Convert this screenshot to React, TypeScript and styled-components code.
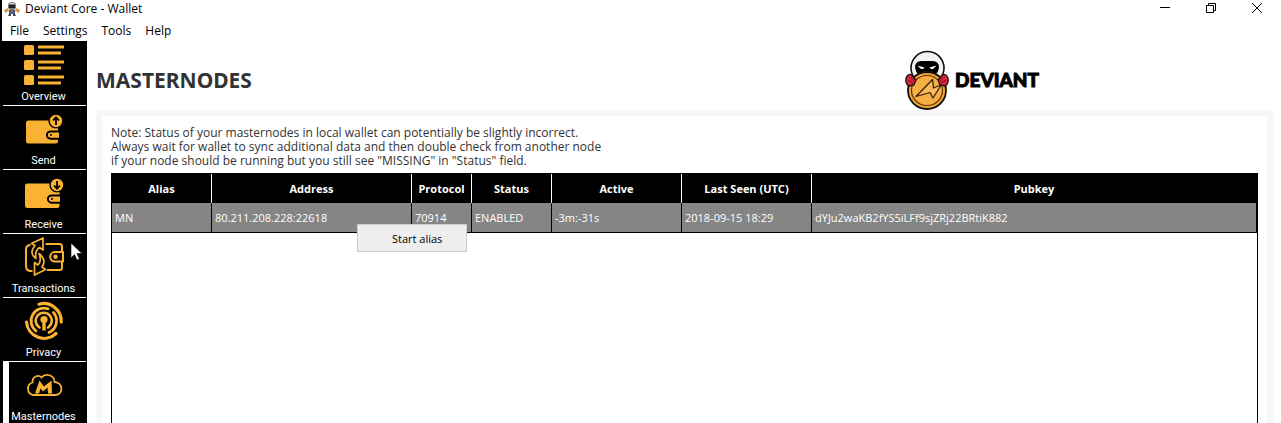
import React from "react";
import styled, { createGlobalStyle } from "styled-components";

const gold = "#f9b233";
const ui = `"Open Sans", "Noto Sans", sans-serif`;
const display = `"Noto Sans", "Open Sans", sans-serif`;

const GlobalStyle = createGlobalStyle`
  * { box-sizing: border-box; }
  body { margin: 0; background: #fff; color: #000; font: 11px/14px ${ui}; }
  button { font: inherit; color: inherit; background: none; border: 0; padding: 0; }
`;

const Window = styled.div`
  display: flex;
  flex-direction: column;
  height: 100vh;
  overflow: hidden;
  border-left: 2px solid #000;
`;

const TitleBar = styled.header`
  display: flex;
  align-items: center;
  height: 18px;
  flex: none;
  padding: 0 18px 0 2px;
`;

const Title = styled.span`
  flex: 1;
  padding-left: 5px;
  font-size: 12px;
`;

const WindowButton = styled.button`
  display: flex;
  align-items: center;
  justify-content: center;
  width: 12px;
  height: 14px;
  margin-left: 34px;
`;

const MenuBar = styled.nav`
  display: flex;
  align-items: center;
  gap: 14px;
  flex: none;
  height: 23px;
  padding: 2px 8px 0;
`;

const MenuItem = styled.button`
  font-size: 12px;
`;

const Main = styled.div`
  display: flex;
  flex: 1;
  min-height: 0;
`;

const Sidebar = styled.nav`
  flex: none;
  width: 85px;
  overflow: hidden;
  padding: 1px 1px 0;
  background: #000;
`;

const NavButton = styled.button<{ $active?: boolean }>`
  display: flex;
  flex-direction: column;
  align-items: center;
  position: relative;
  width: 100%;
  height: 64px;
  border-bottom: 1px solid #fff;
  color: #fff;
  box-shadow: ${(p) => (p.$active ? "inset 6px 0 #fff" : "none")};
`;

const NavIcon = styled.svg`
  display: block;
  width: 84px;
  height: 46px;
  flex: none;
`;

const NavLabel = styled.span`
  padding: 2px 2px 0 0;
  font: 11px/14px Roboto, sans-serif;
`;

const Pointer = styled.svg`
  position: absolute;
  left: 67px;
  top: 8px;
`;

const Page = styled.main`
  display: flex;
  flex-direction: column;
  flex: 1;
  min-width: 0;
  padding: 0 8px 0 9px;
`;

const PageHeader = styled.div`
  display: flex;
  align-items: center;
  justify-content: space-between;
  flex: none;
  height: 69px;
  padding: 9px 234px 0 0;
`;

const Heading = styled.h1`
  margin: 0;
  color: #333;
  font: bold 21px/24px ${display};
`;

const Brand = styled.div`
  display: flex;
  align-items: center;
  gap: 4px;
  font: 900 19px/24px Lato, sans-serif;
  -webkit-text-stroke: 1px #000;
`;

const Panel = styled.section`
  display: flex;
  flex-direction: column;
  flex: 1;
  padding: 10px 9px 0;
  border: solid #f7f7f7;
  border-width: 6px 6px 0;
`;

const Note = styled.p`
  margin: 0 0 5px;
  color: #333;
  font: 12px/14px ${ui};
`;

const TableFrame = styled.div`
  position: relative;
  flex: 1;
  border: solid #000;
  border-width: 1px 1px 0;
`;

const Table = styled.table`
  width: 100%;
  table-layout: fixed;
  border-collapse: separate;
  border-spacing: 0;
`;

const HeadCell = styled.th`
  height: 29px;
  padding: 0;
  background: #000;
  color: #fff;
  border-right: 1px solid #fff;
  font-weight: bold;
  &:last-child { border-color: #000; }
`;

const Cell = styled.td`
  height: 30px;
  padding: 0 3px;
  background: #858585;
  color: #fff;
  border: solid #000;
  border-width: 0 1px 1px 0;
  white-space: nowrap;
`;

const ContextMenu = styled.div`
  position: absolute;
  left: 245px;
  top: 50px;
  width: 110px;
  height: 28px;
  border: 1px solid #ccc;
  background: #eee;
`;

const ContextItem = styled.button`
  width: 100%;
  height: 26px;
  padding: 1px 0 0 34px;
  text-align: left;
`;

const OverviewIcon = () => (
  <g fill={gold}>
    {[3, 18, 33].map((y) => (
      <g key={y}>
        <rect x="21" y={y} width="10" height="10" rx="1.5" />
        <rect x="35" y={y + 0.5} width="26" height="3" />
        <rect x="35" y={y + 6.5} width="23" height="3" />
      </g>
    ))}
  </g>
);

const WalletIcon = ({ down }: { down?: boolean }) => (
  <g transform={down ? "translate(0 -1)" : undefined}>
    <rect x={down ? 22 : 23} y="14.5" width={down ? 34.5 : 32} height={down ? 24.5 : 23} rx="2.5" fill={gold} />
    <g transform={down ? "translate(1 1)" : undefined}>
      <circle cx="53" cy="15" r="7.6" fill="#000" />
      <circle cx="53" cy="15" r="6.2" fill={gold} />
      <path
        d="M53 19v-7M50 14.5l3-3.2 3 3.2"
        transform={down ? "rotate(180 53 15)" : undefined}
        fill="none"
        stroke="#000"
        strokeWidth="1.8"
      />
      <path d="M56 25.5h-8.5a3.6 3.6 0 0 0 0 7.2H56" fill={gold} stroke="#000" strokeWidth="2" />
      <circle cx="48" cy="29" r="1" fill="#000" />
    </g>
  </g>
);

const TransactionsIcon = () => (
  <g fill="none" stroke={gold} strokeWidth="2" strokeLinejoin="round">
    <path d="M27.500 11c-3 0-4.500 1.500-4.500 4.500v16.500c0 3 2 5 5 5h1.500M42.500 10h14q2.500 0 2.500 2.500v5.500M59 27.500v6q0 2.500-2.500 2.500H44" />
    <path d="M60 18h-8a4.800 4.800 0 0 0 0 9.600h8z" />
    <circle cx="52.500" cy="22.800" r="1.300" fill={gold} />
    <path d="M28.500 9.500L40 4v12l-3.500-2.500Q31.500 17 33 24.500Q25.500 19 32 11.500z" strokeWidth="1.700" />
    <path d="M42.500 35.500L31.500 41V28.500l3.500 2.500q4-4 1-11.500q8 6.500 3 13.500z" strokeWidth="1.700" />
  </g>
);

const PrivacyIcon = () => (
  <g fill="none" stroke={gold} strokeWidth="3.200" strokeLinecap="round">
    <path d="M36 6.200A17.500 17.500 0 0 1 58.200 24" />
    <path d="M23.500 24A17.500 17.500 0 0 0 53 35.500" />
    <path d="M45 10.800A12.800 12.800 0 0 0 33 33M50.500 14.500A12.800 12.800 0 0 1 46 34.500" strokeWidth="2.800" />
    <path d="M36.500 29.500A8 8 0 1 1 45 29.500" strokeWidth="2.600" />
    <circle cx="41" cy="21.500" r="3.600" fill={gold} stroke="none" />
    <path d="M41 22v10.500" strokeLinecap="butt" strokeWidth="3.400" />
  </g>
);

const MasternodeIcon = () => (
  <g>
    <path
      d="M30 33a6.500 6.500 0 0 1-.5-12.500c-.5-6 6-8.500 9-5 4-5 13-2.500 13 4.500 9 .5 9 12.500 1 13z"
      fill="none"
      stroke={gold}
      strokeWidth="1.8"
    />
    <path d="M32 31.500l4.500-13 4.500 6 7.500-6 .500 13h-4l-.500-6-4.500 4-2.500-3-1.500 5z" fill={gold} />
  </g>
);

const navItems = [
  { label: "Overview", icon: <OverviewIcon /> },
  { label: "Send", icon: <WalletIcon /> },
  { label: "Receive", icon: <WalletIcon down /> },
  { label: "Transactions", icon: <TransactionsIcon /> },
  { label: "Privacy", icon: <PrivacyIcon /> },
  { label: "Masternodes", icon: <MasternodeIcon /> },
];

const columns = [
  { label: "Alias", width: 100, value: "MN" },
  { label: "Address", width: 200, value: "80.211.208.228:22618" },
  { label: "Protocol", width: 60, value: "70914" },
  { label: "Status", width: 80, value: "ENABLED" },
  { label: "Active", width: 130, value: "-3m:-31s" },
  { label: "Last Seen (UTC)", width: 130, value: "2018-09-15 18:29" },
  { label: "Pubkey", value: "dYJu2waKB2fYS5iLFf9sjZRj22BRtiK882" },
];

const AppIcon = () => (
  <svg width="16" height="16" viewBox="0 0 16 16">
    <path d="M4 5a4 4 0 0 1 8 0v2l-2 2H6L4 7z" fill="#777" />
    <path d="M5 4h6v3H5z" fill="#222" />
    <path d="M6 2h4v1H6z" fill="#ddd" />
    <path d="M4 7L0 9l1 3 4-2zM12 7l4 2-1 3-4-2z" fill="#d89a3c" />
    <path d="M5 9h6v4H5z" fill="#345f94" />
    <path d="M7 9h2v3H7z" fill="#b9483a" />
    <path d="M5 13h2v2H4zM9 13h2l1 2H9z" fill="#444" />
  </svg>
);

const Mascot = () => (
  <svg width="47" height="60" viewBox="0 0 47 60">
    <circle cx="23.500" cy="18" r="16.500" fill="#f2f2f2" stroke="#111" strokeWidth="1.600" />
    <path d="M11 16q1-5 7-5h10q6 0 7 5 0 7-5 9H16q-5-2-5-9z" fill="#000" />
    <path d="M13.500 15.500l7 2q-1 2-3.500 1.500zM32.500 15.500l-7 2q1 2 3.500 1.500z" fill="#fff" />
    <ellipse cx="23" cy="40.500" rx="19" ry="18.500" fill="#f3a52f" stroke="#111" strokeWidth="1.800" />
    <ellipse cx="23" cy="40.500" rx="15.500" ry="15" fill="#f7ae42" stroke="#5a3210" strokeWidth="1.200" />
    <path d="M12 46.500L28.500 29.500l1 8.500 8-3.500L29 48l-3-5.500z" fill="#f9b85a" stroke="#3b2009" strokeWidth="1.300" strokeLinejoin="round" />
    <path d="M2 28q2-5 6-3l4 5-2 5-5 1q-4-2-3-8zM44 28q-2-5-6-3l-4 5 2 5 5 1q4-2 3-8z" fill="#d7263b" stroke="#111" strokeWidth="1.300" />
    <path d="M4 30l5 3M7 27l3 4M42 30l-5 3M39 27l-3 4" stroke="#7b0e1c" strokeWidth="1" />
  </svg>
);

export default function App() {
  return (
    <>
      <GlobalStyle />
      <Window>
        <TitleBar>
          <AppIcon />
          <Title>Deviant Core - Wallet</Title>
          <WindowButton aria-label="Minimize">
            <svg width="12" height="12"><path d="M1 4.500h10" stroke="#000" /></svg>
          </WindowButton>
          <WindowButton aria-label="Restore">
            <svg width="12" height="12" fill="none" stroke="#000">
              <path d="M1.500 2.500h7v7h-7zM3.500 2.500v-2h7v7h-2" />
            </svg>
          </WindowButton>
          <WindowButton aria-label="Close">
            <svg width="12" height="12"><path d="M1 0l10 10M11 0L1 10" stroke="#000" /></svg>
          </WindowButton>
        </TitleBar>
        <MenuBar>
          {["File", "Settings", "Tools", "Help"].map((m) => (
            <MenuItem key={m}>{m}</MenuItem>
          ))}
        </MenuBar>
        <Main>
          <Sidebar>
            {navItems.map((item) => (
              <NavButton key={item.label} $active={item.label === "Masternodes"}>
                <NavIcon viewBox="0 0 84 46">{item.icon}</NavIcon>
                <NavLabel>{item.label}</NavLabel>
                {item.label === "Transactions" && (
                  <Pointer width="13" height="20" viewBox="0 0 13 20">
                    <path d="M1 1v15l3.500-3.500L7 18l2.500-1-2.500-5.500h5z" fill="#fff" stroke="#000" strokeWidth=".6" />
                  </Pointer>
                )}
              </NavButton>
            ))}
          </Sidebar>
          <Page>
            <PageHeader>
              <Heading>MASTERNODES</Heading>
              <Brand>
                <Mascot />
                DEVIANT
              </Brand>
            </PageHeader>
            <Panel>
              <Note>
                Note: Status of your masternodes in local wallet can potentially be slightly incorrect.
                <br />
                Always wait for wallet to sync additional data and then double check from another node
                <br />
                if your node should be running but you still see "MISSING" in "Status" field.
              </Note>
              <TableFrame>
                <Table>
                  <colgroup>
                    {columns.map((c) => (
                      <col key={c.label} width={c.width} />
                    ))}
                  </colgroup>
                  <thead>
                    <tr>
                      {columns.map((c) => (
                        <HeadCell key={c.label}>{c.label}</HeadCell>
                      ))}
                    </tr>
                  </thead>
                  <tbody>
                    <tr>
                      {columns.map((c) => (
                        <Cell key={c.label}>{c.value}</Cell>
                      ))}
                    </tr>
                  </tbody>
                </Table>
                <ContextMenu role="menu">
                  <ContextItem role="menuitem">Start alias</ContextItem>
                </ContextMenu>
              </TableFrame>
            </Panel>
          </Page>
        </Main>
      </Window>
    </>
  );
}
